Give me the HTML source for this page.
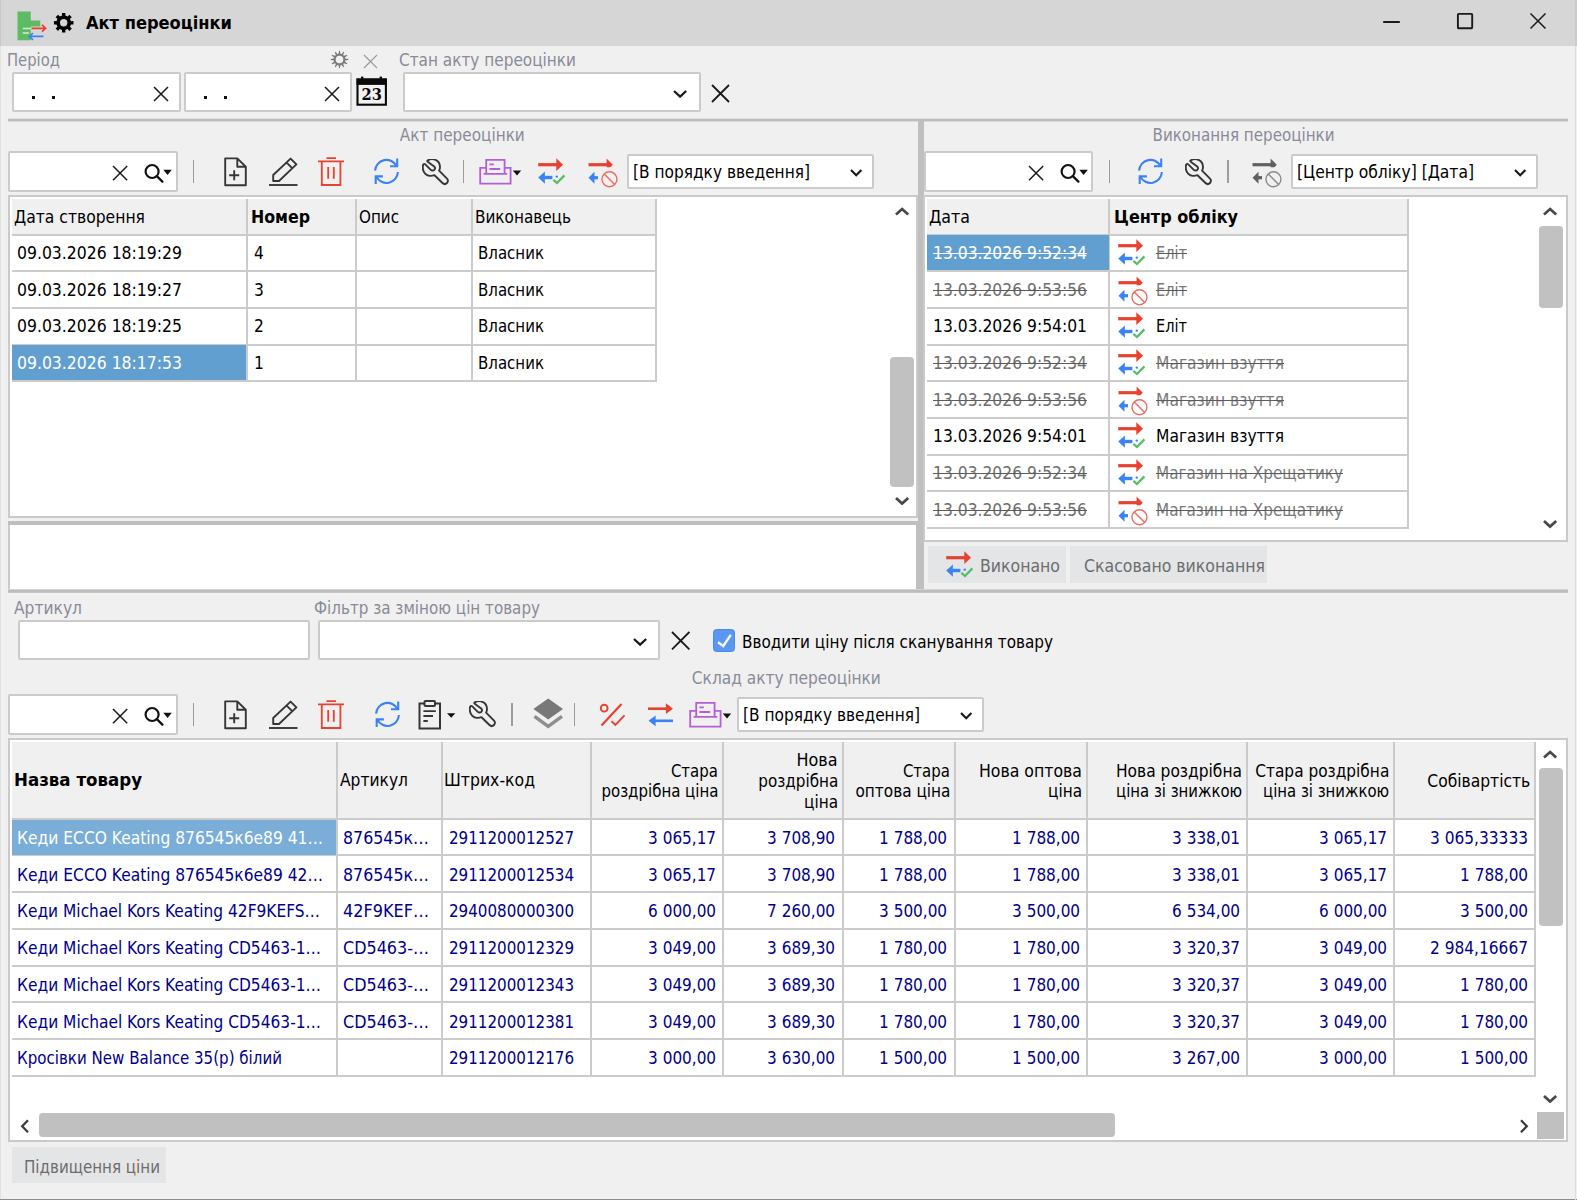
<!DOCTYPE html>
<html lang="uk"><head><meta charset="utf-8"><title>Акт переоцінки</title>
<style>
html,body{margin:0;padding:0;background:#f0f0f0;}
#w{position:relative;width:1577px;height:1200px;overflow:hidden;background:#f0f0f0;font-family:"DejaVu Sans Condensed","Liberation Sans",sans-serif;font-size:18px;}
#w div,#w span,#w svg{position:absolute;box-sizing:border-box;}
#w span{white-space:pre;}
</style></head>
<body><div id="w">
<div style="left:0px;top:0px;width:1577px;height:46px;background:#d6d6d6;"></div>
<div style="left:0px;top:46px;width:1px;height:1154px;background:#e1e1e1;"></div>
<div style="left:0px;top:0px;width:1px;height:46px;background:#c9c9c9;"></div>
<svg style="left:17px;top:11px" width="31" height="30" viewBox="0 0 31 30" fill="none">
<path d="M0.5 0.4 H13.8 V9.4 H23.3 V15.6 H13.8 V29.3 H0.5 Z" fill="#5dbb63"/>
<path d="M5.8 17.5 H14 M5.8 22.1 H12" stroke="#d3edd5" stroke-width="1.5"/>
<path d="M14.5 17.3 H28.3 M25 13.9 L28.6 17.3 L25 20.7" stroke="#e8412f" stroke-width="1.7" stroke-linejoin="miter"/>
<path d="M12.6 25.4 H26.5 M16 22 L12.4 25.4 L16 28.8" stroke="#3b82f6" stroke-width="1.7" stroke-linejoin="miter"/>
</svg>
<svg style="left:53px;top:12px" width="22" height="22" viewBox="0 0 22 22" fill="none"><path d="M9.09 3.58 L8.97 1.05 L12.43 1.05 L12.31 3.58 L14.67 4.55 L16.37 2.68 L18.82 5.13 L16.95 6.83 L17.92 9.19 L20.45 9.07 L20.45 12.53 L17.92 12.41 L16.95 14.77 L18.82 16.47 L16.37 18.92 L14.67 17.05 L12.31 18.02 L12.43 20.55 L8.97 20.55 L9.09 18.02 L6.73 17.05 L5.03 18.92 L2.58 16.47 L4.45 14.77 L3.48 12.41 L0.95 12.53 L0.95 9.07 L3.48 9.19 L4.45 6.83 L2.58 5.13 L5.03 2.68 L6.73 4.55 Z M14.40 10.80 A3.7 3.7 0 1 0 7.00 10.80 A3.7 3.7 0 1 0 14.40 10.80 Z" fill="#000" fill-rule="evenodd"/></svg>
<span style="top:11.50px;font-size:17.5px;line-height:22px;color:#000;font-weight:700;left:86px;transform-origin:0 50%;transform:scaleX(1.0319);">Акт переоцінки</span>
<svg style="left:1380px;top:10.6px" width="22" height="22" viewBox="0 0 22 22" fill="none"><path d="M3.2 11 H19.8" stroke="#1a1a1a" stroke-width="2"/></svg>
<svg style="left:1454px;top:10.3px" width="22" height="22" viewBox="0 0 22 22" fill="none"><rect x="3.9" y="3.9" width="14.3" height="14.3" rx="0.8" stroke="#1a1a1a" stroke-width="1.9"/></svg>
<svg style="left:1527px;top:10.3px" width="22" height="22" viewBox="0 0 22 22" fill="none"><path d="M3.5 3.5 L18.5 18.5 M18.5 3.5 L3.5 18.5" stroke="#1a1a1a" stroke-width="1.5"/></svg>
<span style="top:48.50px;font-size:18px;line-height:22px;color:#8a8a98;left:7px;transform-origin:0 50%;transform:scaleX(0.9131);">Період</span>
<svg style="left:330.3px;top:50.4px" width="19" height="19" viewBox="0 0 19 19" fill="none"><path d="M8.56 3.78 L9.07 0.71 L9.93 0.71 L10.44 3.78 L11.55 4.07 L13.52 1.67 L14.27 2.10 L13.17 5.01 L13.99 5.83 L16.90 4.73 L17.33 5.48 L14.93 7.45 L15.22 8.56 L18.29 9.07 L18.29 9.93 L15.22 10.44 L14.93 11.55 L17.33 13.52 L16.90 14.27 L13.99 13.17 L13.17 13.99 L14.27 16.90 L13.52 17.33 L11.55 14.93 L10.44 15.22 L9.93 18.29 L9.07 18.29 L8.56 15.22 L7.45 14.93 L5.48 17.33 L4.73 16.90 L5.83 13.99 L5.01 13.17 L2.10 14.27 L1.67 13.52 L4.07 11.55 L3.78 10.44 L0.71 9.93 L0.71 9.07 L3.78 8.56 L4.07 7.45 L1.67 5.48 L2.10 4.73 L5.01 5.83 L5.83 5.01 L4.73 2.10 L5.48 1.67 L7.45 4.07 Z M13.30 9.50 A3.8 3.8 0 1 0 5.70 9.50 A3.8 3.8 0 1 0 13.30 9.50 Z" fill="#7b7b7b" fill-rule="evenodd"/></svg>
<svg style="left:363.3px;top:53.6px" width="15" height="15" viewBox="0 0 15 15" fill="none"><path d="M1 1 L14 14 M14 1 L1 14" stroke="#9a9a9a" stroke-width="1.2"/></svg>
<span style="top:48.50px;font-size:18px;line-height:22px;color:#8a8a98;left:399px;transform-origin:0 50%;transform:scaleX(0.9446);">Стан акту переоцінки</span>
<div style="left:12px;top:72px;width:169px;height:40px;background:#fff;border:2px solid #cbcbcb;border-radius:2px;"></div>
<div style="left:32px;top:96px;width:3px;height:3px;background:#111;"></div>
<div style="left:51.5px;top:96px;width:3px;height:3px;background:#111;"></div>
<svg style="left:153px;top:85.5px" width="16" height="16" viewBox="0 0 16 16" fill="none"><path d="M1 1 L15 15 M15 1 L1 15" stroke="#1a1a1a" stroke-width="1.5"/></svg>
<div style="left:184px;top:72px;width:168px;height:40px;background:#fff;border:2px solid #cbcbcb;border-radius:2px;"></div>
<div style="left:204px;top:96px;width:3px;height:3px;background:#111;"></div>
<div style="left:223.5px;top:96px;width:3px;height:3px;background:#111;"></div>
<svg style="left:324px;top:85.5px" width="16" height="16" viewBox="0 0 16 16" fill="none"><path d="M1 1 L15 15 M15 1 L1 15" stroke="#1a1a1a" stroke-width="1.5"/></svg>
<svg style="left:356px;top:76px" width="32" height="31" viewBox="0 0 32 31" fill="none">
<rect x="1.5" y="3.5" width="28.4" height="25.2" fill="#f2f2f2" stroke="#0a0a0a" stroke-width="2.1"/>
<rect x="0.5" y="2.5" width="30.4" height="6.4" fill="#0a0a0a"/>
<rect x="5" y="0.6" width="2.4" height="3" fill="#0a0a0a"/><rect x="23.6" y="0.6" width="2.4" height="3" fill="#0a0a0a"/>
<text x="5.6" y="24.2" textLength="20.4" lengthAdjust="spacingAndGlyphs" font-family="DejaVu Serif,Liberation Serif,serif" font-weight="700" font-size="16.4" fill="#0a0a0a">23</text>
</svg>
<div style="left:403px;top:72px;width:298px;height:40px;background:#fff;border:2px solid #cbcbcb;border-radius:2px;"></div>
<svg style="left:671.9px;top:88.9px" width="16.2" height="9.6" viewBox="0 0 16.2 9.6" fill="none"><path d="M2 2 L8.1 7.6 L14.2 2" stroke="#1a1a1a" stroke-width="2.3" stroke-linejoin="miter"/></svg>
<svg style="left:710.5px;top:84.0px" width="19.0" height="19.0" viewBox="0 0 19.0 19.0" fill="none"><path d="M1 1 L18.0 18.0 M18.0 1 L1 18.0" stroke="#1a1a1a" stroke-width="1.8"/></svg>
<div style="left:8px;top:118px;width:1560px;height:4px;background:linear-gradient(to bottom,#e0e0e0 0 25%,#bdbdbd 25% 75%,#d8d8d8 75% 100%);"></div>
<div style="left:918px;top:121px;width:6px;height:401px;background:#bfbfbf;"></div>
<div style="left:916px;top:521px;width:8px;height:70px;background:#bfbfbf;"></div>
<div style="left:8px;top:521px;width:910px;height:4px;background:#bfbfbf;"></div>
<div style="left:8px;top:589px;width:1560px;height:4px;background:linear-gradient(to bottom,#d4d4d4 0 25%,#bdbdbd 25% 75%,#c4c4c4 75% 100%);"></div>
<span style="top:123.50px;font-size:18px;line-height:22px;color:#8a8a98;left:396.22px;transform-origin:50% 50%;transform:scaleX(0.9430);">Акт переоцінки</span>
<span style="top:123.50px;font-size:18px;line-height:22px;color:#8a8a98;left:1146.48px;transform-origin:50% 50%;transform:scaleX(0.9332);">Виконання переоцінки</span>
<div style="left:8px;top:151px;width:170px;height:41px;background:#fff;border:2px solid #cbcbcb;border-radius:2px;"></div>
<svg style="left:111.7px;top:165.1px" width="16.2" height="16.2" viewBox="0 0 16.2 16.2" fill="none"><path d="M1 1 L15.2 15.2 M15.2 1 L1 15.2" stroke="#1a1a1a" stroke-width="1.5"/></svg>
<svg style="left:141.5px;top:162.5px" width="34" height="24" viewBox="0 0 34 24" fill="none"><circle cx="10.1" cy="8.5" r="6.5" stroke="#111" stroke-width="2.2"/><path d="M14.8 13.2 L20.4 18.6" stroke="#111" stroke-width="2.3" stroke-linecap="round"/><path d="M21.3 6.7 H29.8 L25.55 12 Z" fill="#111"/></svg>
<div style="left:192.8px;top:160px;width:1.6px;height:23px;background:#9c9c9c;"></div>
<svg style="left:223.5px;top:156.5px" width="24" height="30" viewBox="0 0 24 30" fill="none"><path d="M1.2 1.4 H13.3 L21.8 9.8 V28.2 H1.2 Z M13.3 1.4 V9.8 H21.8" stroke="#363636" stroke-width="1.9" stroke-linejoin="round"/><path d="M10.2 13.2 V23.2 M5.2 18.2 H15.2" stroke="#363636" stroke-width="1.9"/></svg>
<svg style="left:269px;top:156.5px" width="30" height="30" viewBox="0 0 30 30" fill="none"><path d="M0 28 H28.5" stroke="#363636" stroke-width="1.9"/><path d="M21.6 1.6 L27.4 7.4 L10 24 H4.2 V18 Z M17.4 5.4 L23.4 11.4" stroke="#363636" stroke-width="1.9" stroke-linejoin="round"/></svg>
<svg style="left:318px;top:156.5px" width="27" height="30" viewBox="0 0 27 30" fill="none"><path d="M8.5 1.2 H18 M0 4.4 H26 M3.8 4.4 V28 H22.4 V4.4 M10.2 10 V21.8 M15.8 10 V21.8" stroke="#e8412f" stroke-width="1.8"/></svg>
<svg style="left:372.8px;top:157px" width="28" height="28" viewBox="0 0 28 28" fill="none"><path d="M2.1 13.6 A11.4 11.4 0 0 1 23.6 9 M24.2 1.6 V9.2 H17 M24.9 15 A11.4 11.4 0 0 1 3.3 19.6 M2.7 27 V19.4 H9.9" stroke="#3b82f6" stroke-width="2.1" stroke-linejoin="miter"/></svg>
<svg style="left:421.5px;top:158.5px" width="28" height="27" viewBox="0 0 28 27" fill="none"><path d="M5.6 1.6 C7.5 0.3 11 -0.2 13.5 0.9 C16.2 2.1 18 5 18 8 C18 9.5 17.6 10.7 17.1 11.6 L25 19.6 C26.3 20.9 26.2 22.8 25 24 C23.8 25.2 21.8 25.3 20.5 24 L12.5 16.2 C11 16.8 9.5 17 7.8 16.9 C4.5 16.6 1.5 13.8 0.9 10 C0.6 8.3 0.8 6.8 1.2 5.6 C1.5 4.7 2.6 4.6 3.3 5.3 L8.8 10.8 C9.8 11.8 11.4 11.8 12.3 10.8 C13.2 9.8 13.1 8.4 12.2 7.5 L6 2.9 C5.2 2.4 5 2 5.6 1.6 Z" stroke="#363636" stroke-width="1.9" stroke-linejoin="round"/></svg>
<div style="left:462.90000000000003px;top:160px;width:1.6px;height:23px;background:#9c9c9c;"></div>
<svg style="left:479px;top:158.5px" width="44" height="27" viewBox="0 0 44 27" fill="none"><path d="M7 8.8 H1.2 V24.6 H31.6 V8.8 H25.8 M7.2 14.8 V0.9 H25.6 V14.8 M4.6 14.8 H28.2 M10.4 5.3 H14.8 M10.4 10 H21.2" stroke="#b35fd8" stroke-width="1.8"/><path d="M33.8 11.6 H42.2 L38 16.4 Z" fill="#111"/></svg>
<svg style="left:538px;top:158px" width="29" height="28" viewBox="0 0 29 28" fill="none"><path d="M0.2 6.7 H19" stroke="#e8412f" stroke-width="3.2"/><path d="M18.3 0.3 L25 6.7 L18.3 13.1 Z" fill="#e8412f"/><path d="M6.5 19.5 H14.4" stroke="#3b82f6" stroke-width="3.4"/><path d="M6.9 13.6 L0.2 19.6 L6.9 25.8 Z" fill="#3b82f6"/><circle cx="18.8" cy="18.6" r="1.2" fill="#3b82f6"/><path d="M15.4 21.8 L19 25 L26.4 17.4" stroke="#58bd66" stroke-width="2.3"/></svg>
<svg style="left:587.5px;top:158px" width="32" height="32" viewBox="0 0 32 32" fill="none"><path d="M0.5 6.7 H19" stroke="#e8412f" stroke-width="3.2"/><path d="M18.6 0.5 L24.8 6.7 L22.3 9.2 H18.6 Z" fill="#e8412f"/><path d="M6 19.7 H10" stroke="#3b82f6" stroke-width="3.2"/><path d="M6.5 13.7 L0.5 19.7 L6.5 25.7 Z" fill="#3b82f6"/><circle cx="21.45" cy="21.3" r="7.5" stroke="#ee6a5f" stroke-width="1.4"/><path d="M16.2 16 L26.7 26.6" stroke="#ee6a5f" stroke-width="1.4"/></svg>
<div style="left:627px;top:154px;width:247px;height:35px;background:#fff;border:2px solid #cbcbcb;border-radius:2px;"></div>
<span style="top:160.80px;font-size:18px;line-height:22px;color:#000;left:633px;transform-origin:0 50%;transform:scaleX(0.9503);">[В порядку введення]</span>
<svg style="left:849.3px;top:167.5px" width="14.4" height="9.2" viewBox="0 0 14.4 9.2" fill="none"><path d="M2 2 L7.2 7.2 L12.4 2" stroke="#1a1a1a" stroke-width="2.2" stroke-linejoin="miter"/></svg>
<div style="left:924px;top:151px;width:169px;height:41px;background:#fff;border:2px solid #cbcbcb;border-radius:2px;"></div>
<svg style="left:1027.7px;top:165.1px" width="16.2" height="16.2" viewBox="0 0 16.2 16.2" fill="none"><path d="M1 1 L15.2 15.2 M15.2 1 L1 15.2" stroke="#1a1a1a" stroke-width="1.5"/></svg>
<svg style="left:1057.5px;top:162.5px" width="34" height="24" viewBox="0 0 34 24" fill="none"><circle cx="10.1" cy="8.5" r="6.5" stroke="#111" stroke-width="2.2"/><path d="M14.8 13.2 L20.4 18.6" stroke="#111" stroke-width="2.3" stroke-linecap="round"/><path d="M21.3 6.7 H29.8 L25.55 12 Z" fill="#111"/></svg>
<div style="left:1108.8px;top:160px;width:1.6px;height:23px;background:#9c9c9c;"></div>
<svg style="left:1136.5px;top:157px" width="28" height="28" viewBox="0 0 28 28" fill="none"><path d="M2.1 13.6 A11.4 11.4 0 0 1 23.6 9 M24.2 1.6 V9.2 H17 M24.9 15 A11.4 11.4 0 0 1 3.3 19.6 M2.7 27 V19.4 H9.9" stroke="#3b82f6" stroke-width="2.1" stroke-linejoin="miter"/></svg>
<svg style="left:1184.5px;top:158.5px" width="28" height="27" viewBox="0 0 28 27" fill="none"><path d="M5.6 1.6 C7.5 0.3 11 -0.2 13.5 0.9 C16.2 2.1 18 5 18 8 C18 9.5 17.6 10.7 17.1 11.6 L25 19.6 C26.3 20.9 26.2 22.8 25 24 C23.8 25.2 21.8 25.3 20.5 24 L12.5 16.2 C11 16.8 9.5 17 7.8 16.9 C4.5 16.6 1.5 13.8 0.9 10 C0.6 8.3 0.8 6.8 1.2 5.6 C1.5 4.7 2.6 4.6 3.3 5.3 L8.8 10.8 C9.8 11.8 11.4 11.8 12.3 10.8 C13.2 9.8 13.1 8.4 12.2 7.5 L6 2.9 C5.2 2.4 5 2 5.6 1.6 Z" stroke="#363636" stroke-width="1.9" stroke-linejoin="round"/></svg>
<div style="left:1227.3px;top:160px;width:1.6px;height:23px;background:#9c9c9c;"></div>
<svg style="left:1252px;top:158px" width="32" height="32" viewBox="0 0 32 32" fill="none"><path d="M0.5 6.7 H19" stroke="#606060" stroke-width="3.2"/><path d="M18.6 0.5 L24.8 6.7 L22.3 9.2 H18.6 Z" fill="#606060"/><path d="M6 19.7 H10" stroke="#606060" stroke-width="3.2"/><path d="M6.5 13.7 L0.5 19.7 L6.5 25.7 Z" fill="#606060"/><circle cx="21.45" cy="21.3" r="7.5" stroke="#8a8a8a" stroke-width="1.4"/><path d="M16.2 16 L26.7 26.6" stroke="#8a8a8a" stroke-width="1.4"/></svg>
<div style="left:1291px;top:154px;width:247px;height:35px;background:#fff;border:2px solid #cbcbcb;border-radius:2px;"></div>
<span style="top:160.80px;font-size:18px;line-height:22px;color:#000;left:1297px;transform-origin:0 50%;transform:scaleX(0.9596);">[Центр обліку] [Дата]</span>
<svg style="left:1513.3px;top:167.5px" width="14.4" height="9.2" viewBox="0 0 14.4 9.2" fill="none"><path d="M2 2 L7.2 7.2 L12.4 2" stroke="#1a1a1a" stroke-width="2.2" stroke-linejoin="miter"/></svg>
<div style="left:8px;top:195px;width:910px;height:323px;background:#fff;border:2px solid #cacaca;"></div>
<div style="left:8px;top:525px;width:908px;height:64px;background:#fff;border-left:2px solid #cacaca;"></div>
<div style="left:12px;top:199px;width:643px;height:36px;background:#f0f0f0;"></div>
<div style="left:12px;top:234px;width:645px;height:2px;background:#cbcbcb;"></div>
<div style="left:12px;top:270px;width:645px;height:2px;background:#cbcbcb;"></div>
<div style="left:12px;top:307px;width:645px;height:2px;background:#cbcbcb;"></div>
<div style="left:12px;top:344px;width:645px;height:2px;background:#cbcbcb;"></div>
<div style="left:12px;top:380px;width:645px;height:2px;background:#cbcbcb;"></div>
<div style="left:246px;top:199px;width:2px;height:183px;background:#cbcbcb;"></div>
<div style="left:355px;top:199px;width:2px;height:183px;background:#cbcbcb;"></div>
<div style="left:471px;top:199px;width:2px;height:183px;background:#cbcbcb;"></div>
<div style="left:655px;top:199px;width:2px;height:183px;background:#cbcbcb;"></div>
<span style="top:205.50px;font-size:18px;line-height:22px;color:#000;left:14px;transform-origin:0 50%;transform:scaleX(0.9630);">Дата створення</span>
<span style="top:205.50px;font-size:18px;line-height:22px;color:#000;font-weight:700;left:251px;transform-origin:0 50%;transform:scaleX(0.9752);">Номер</span>
<span style="top:205.50px;font-size:18px;line-height:22px;color:#000;left:359px;transform-origin:0 50%;transform:scaleX(0.9353);">Опис</span>
<span style="top:205.50px;font-size:18px;line-height:22px;color:#000;left:475px;transform-origin:0 50%;transform:scaleX(0.9419);">Виконавець</span>
<span style="top:242.00px;font-size:18px;line-height:22px;color:#000;left:17px;transform-origin:0 50%;transform:scaleX(0.9674);">09.03.2026 18:19:29</span>
<span style="top:242.00px;font-size:18px;line-height:22px;color:#000;left:254px;transform-origin:0 50%;transform:scaleX(0.9550);">4</span>
<span style="top:242.00px;font-size:18px;line-height:22px;color:#000;left:478px;transform-origin:0 50%;transform:scaleX(0.9271);">Власник</span>
<span style="top:278.67px;font-size:18px;line-height:22px;color:#000;left:17px;transform-origin:0 50%;transform:scaleX(0.9674);">09.03.2026 18:19:27</span>
<span style="top:278.67px;font-size:18px;line-height:22px;color:#000;left:254px;transform-origin:0 50%;transform:scaleX(0.9550);">3</span>
<span style="top:278.67px;font-size:18px;line-height:22px;color:#000;left:478px;transform-origin:0 50%;transform:scaleX(0.9271);">Власник</span>
<span style="top:315.34px;font-size:18px;line-height:22px;color:#000;left:17px;transform-origin:0 50%;transform:scaleX(0.9674);">09.03.2026 18:19:25</span>
<span style="top:315.34px;font-size:18px;line-height:22px;color:#000;left:254px;transform-origin:0 50%;transform:scaleX(0.9550);">2</span>
<span style="top:315.34px;font-size:18px;line-height:22px;color:#000;left:478px;transform-origin:0 50%;transform:scaleX(0.9271);">Власник</span>
<div style="left:12px;top:345px;width:234px;height:35px;background:#629fd1;"></div>
<span style="top:352.01px;font-size:18px;line-height:22px;color:#fff;left:17px;transform-origin:0 50%;transform:scaleX(0.9674);">09.03.2026 18:17:53</span>
<span style="top:352.01px;font-size:18px;line-height:22px;color:#000;left:254px;transform-origin:0 50%;transform:scaleX(0.9550);">1</span>
<span style="top:352.01px;font-size:18px;line-height:22px;color:#000;left:478px;transform-origin:0 50%;transform:scaleX(0.9271);">Власник</span>
<svg style="left:893.6px;top:206.7px" width="16.2" height="9.6" viewBox="0 0 16.2 9.6" fill="none"><path d="M2 7.6 L8.1 2 L14.2 7.6" stroke="#484848" stroke-width="2.7" stroke-linejoin="miter"/></svg>
<div style="left:890px;top:357px;width:24px;height:130px;background:#c1c1c1;border-radius:4px;"></div>
<svg style="left:893.6px;top:495.7px" width="16.2" height="9.6" viewBox="0 0 16.2 9.6" fill="none"><path d="M2 2 L8.1 7.6 L14.2 2" stroke="#484848" stroke-width="2.7" stroke-linejoin="miter"/></svg>
<div style="left:923px;top:195px;width:645px;height:347px;background:#fff;border:2px solid #cacaca;"></div>
<div style="left:927px;top:199px;width:480px;height:36px;background:#f0f0f0;"></div>
<div style="left:927px;top:234px;width:482px;height:2px;background:#cbcbcb;"></div>
<div style="left:927px;top:270px;width:482px;height:2px;background:#cbcbcb;"></div>
<div style="left:927px;top:307px;width:482px;height:2px;background:#cbcbcb;"></div>
<div style="left:927px;top:344px;width:482px;height:2px;background:#cbcbcb;"></div>
<div style="left:927px;top:380px;width:482px;height:2px;background:#cbcbcb;"></div>
<div style="left:927px;top:417px;width:482px;height:2px;background:#cbcbcb;"></div>
<div style="left:927px;top:454px;width:482px;height:2px;background:#cbcbcb;"></div>
<div style="left:927px;top:490px;width:482px;height:2px;background:#cbcbcb;"></div>
<div style="left:927px;top:527px;width:482px;height:2px;background:#cbcbcb;"></div>
<div style="left:1108px;top:199px;width:2px;height:330px;background:#cbcbcb;"></div>
<div style="left:1407px;top:199px;width:2px;height:330px;background:#cbcbcb;"></div>
<span style="top:205.50px;font-size:18px;line-height:22px;color:#000;left:929px;transform-origin:0 50%;transform:scaleX(0.9776);">Дата</span>
<span style="top:205.50px;font-size:18px;line-height:22px;color:#000;font-weight:700;left:1114px;transform-origin:0 50%;transform:scaleX(0.9903);">Центр обліку</span>
<div style="left:927px;top:235px;width:182px;height:35px;background:#629fd1;"></div>
<span style="top:242.00px;font-size:18px;line-height:22px;color:#fff;text-decoration:line-through;text-decoration-color:#fff;text-decoration-thickness:1.2px;left:933px;transform-origin:0 50%;transform:scaleX(0.9609);">13.03.2026 9:52:34</span>
<svg style="left:1117.8px;top:239.1px" width="29" height="28" viewBox="0 0 29 28" fill="none"><path d="M0.2 6.7 H19" stroke="#e8412f" stroke-width="3.2"/><path d="M18.3 0.3 L25 6.7 L18.3 13.1 Z" fill="#e8412f"/><path d="M6.5 19.5 H14.4" stroke="#3b82f6" stroke-width="3.4"/><path d="M6.9 13.6 L0.2 19.6 L6.9 25.8 Z" fill="#3b82f6"/><circle cx="18.8" cy="18.6" r="1.2" fill="#3b82f6"/><path d="M15.4 21.8 L19 25 L26.4 17.4" stroke="#58bd66" stroke-width="2.3"/></svg>
<span style="top:242.00px;font-size:18px;line-height:22px;color:#7a7a7a;text-decoration:line-through;text-decoration-color:#5c5c5c;text-decoration-thickness:1.2px;left:1156px;transform-origin:0 50%;transform:scaleX(0.8981);">Еліт</span>
<span style="top:278.67px;font-size:18px;line-height:22px;color:#6e6e6e;text-decoration:line-through;text-decoration-color:#5c5c5c;text-decoration-thickness:1.2px;left:933px;transform-origin:0 50%;transform:scaleX(0.9609);">13.03.2026 9:53:56</span>
<svg style="left:1117.5px;top:275.77000000000004px" width="32" height="32" viewBox="0 0 32 32" fill="none"><path d="M0.5 6.7 H19" stroke="#e8412f" stroke-width="3.2"/><path d="M18.6 0.5 L24.8 6.7 L22.3 9.2 H18.6 Z" fill="#e8412f"/><path d="M6 19.7 H10" stroke="#3b82f6" stroke-width="3.2"/><path d="M6.5 13.7 L0.5 19.7 L6.5 25.7 Z" fill="#3b82f6"/><circle cx="21.45" cy="21.3" r="7.5" stroke="#ee6a5f" stroke-width="1.4"/><path d="M16.2 16 L26.7 26.6" stroke="#ee6a5f" stroke-width="1.4"/></svg>
<span style="top:278.67px;font-size:18px;line-height:22px;color:#7a7a7a;text-decoration:line-through;text-decoration-color:#5c5c5c;text-decoration-thickness:1.2px;left:1156px;transform-origin:0 50%;transform:scaleX(0.8981);">Еліт</span>
<span style="top:315.34px;font-size:18px;line-height:22px;color:#000;left:933px;transform-origin:0 50%;transform:scaleX(0.9609);">13.03.2026 9:54:01</span>
<svg style="left:1117.8px;top:312.44000000000005px" width="29" height="28" viewBox="0 0 29 28" fill="none"><path d="M0.2 6.7 H19" stroke="#e8412f" stroke-width="3.2"/><path d="M18.3 0.3 L25 6.7 L18.3 13.1 Z" fill="#e8412f"/><path d="M6.5 19.5 H14.4" stroke="#3b82f6" stroke-width="3.4"/><path d="M6.9 13.6 L0.2 19.6 L6.9 25.8 Z" fill="#3b82f6"/><circle cx="18.8" cy="18.6" r="1.2" fill="#3b82f6"/><path d="M15.4 21.8 L19 25 L26.4 17.4" stroke="#58bd66" stroke-width="2.3"/></svg>
<span style="top:315.34px;font-size:18px;line-height:22px;color:#000;left:1156px;transform-origin:0 50%;transform:scaleX(0.8981);">Еліт</span>
<span style="top:352.01px;font-size:18px;line-height:22px;color:#6e6e6e;text-decoration:line-through;text-decoration-color:#5c5c5c;text-decoration-thickness:1.2px;left:933px;transform-origin:0 50%;transform:scaleX(0.9609);">13.03.2026 9:52:34</span>
<svg style="left:1117.8px;top:349.11px" width="29" height="28" viewBox="0 0 29 28" fill="none"><path d="M0.2 6.7 H19" stroke="#e8412f" stroke-width="3.2"/><path d="M18.3 0.3 L25 6.7 L18.3 13.1 Z" fill="#e8412f"/><path d="M6.5 19.5 H14.4" stroke="#3b82f6" stroke-width="3.4"/><path d="M6.9 13.6 L0.2 19.6 L6.9 25.8 Z" fill="#3b82f6"/><circle cx="18.8" cy="18.6" r="1.2" fill="#3b82f6"/><path d="M15.4 21.8 L19 25 L26.4 17.4" stroke="#58bd66" stroke-width="2.3"/></svg>
<span style="top:352.01px;font-size:18px;line-height:22px;color:#7a7a7a;text-decoration:line-through;text-decoration-color:#5c5c5c;text-decoration-thickness:1.2px;left:1156px;transform-origin:0 50%;transform:scaleX(0.9585);">Магазин взуття</span>
<span style="top:388.68px;font-size:18px;line-height:22px;color:#6e6e6e;text-decoration:line-through;text-decoration-color:#5c5c5c;text-decoration-thickness:1.2px;left:933px;transform-origin:0 50%;transform:scaleX(0.9609);">13.03.2026 9:53:56</span>
<svg style="left:1117.5px;top:385.78000000000003px" width="32" height="32" viewBox="0 0 32 32" fill="none"><path d="M0.5 6.7 H19" stroke="#e8412f" stroke-width="3.2"/><path d="M18.6 0.5 L24.8 6.7 L22.3 9.2 H18.6 Z" fill="#e8412f"/><path d="M6 19.7 H10" stroke="#3b82f6" stroke-width="3.2"/><path d="M6.5 13.7 L0.5 19.7 L6.5 25.7 Z" fill="#3b82f6"/><circle cx="21.45" cy="21.3" r="7.5" stroke="#ee6a5f" stroke-width="1.4"/><path d="M16.2 16 L26.7 26.6" stroke="#ee6a5f" stroke-width="1.4"/></svg>
<span style="top:388.68px;font-size:18px;line-height:22px;color:#7a7a7a;text-decoration:line-through;text-decoration-color:#5c5c5c;text-decoration-thickness:1.2px;left:1156px;transform-origin:0 50%;transform:scaleX(0.9585);">Магазин взуття</span>
<span style="top:425.35px;font-size:18px;line-height:22px;color:#000;left:933px;transform-origin:0 50%;transform:scaleX(0.9609);">13.03.2026 9:54:01</span>
<svg style="left:1117.8px;top:422.45000000000005px" width="29" height="28" viewBox="0 0 29 28" fill="none"><path d="M0.2 6.7 H19" stroke="#e8412f" stroke-width="3.2"/><path d="M18.3 0.3 L25 6.7 L18.3 13.1 Z" fill="#e8412f"/><path d="M6.5 19.5 H14.4" stroke="#3b82f6" stroke-width="3.4"/><path d="M6.9 13.6 L0.2 19.6 L6.9 25.8 Z" fill="#3b82f6"/><circle cx="18.8" cy="18.6" r="1.2" fill="#3b82f6"/><path d="M15.4 21.8 L19 25 L26.4 17.4" stroke="#58bd66" stroke-width="2.3"/></svg>
<span style="top:425.35px;font-size:18px;line-height:22px;color:#000;left:1156px;transform-origin:0 50%;transform:scaleX(0.9585);">Магазин взуття</span>
<span style="top:462.02px;font-size:18px;line-height:22px;color:#6e6e6e;text-decoration:line-through;text-decoration-color:#5c5c5c;text-decoration-thickness:1.2px;left:933px;transform-origin:0 50%;transform:scaleX(0.9609);">13.03.2026 9:52:34</span>
<svg style="left:1117.8px;top:459.12px" width="29" height="28" viewBox="0 0 29 28" fill="none"><path d="M0.2 6.7 H19" stroke="#e8412f" stroke-width="3.2"/><path d="M18.3 0.3 L25 6.7 L18.3 13.1 Z" fill="#e8412f"/><path d="M6.5 19.5 H14.4" stroke="#3b82f6" stroke-width="3.4"/><path d="M6.9 13.6 L0.2 19.6 L6.9 25.8 Z" fill="#3b82f6"/><circle cx="18.8" cy="18.6" r="1.2" fill="#3b82f6"/><path d="M15.4 21.8 L19 25 L26.4 17.4" stroke="#58bd66" stroke-width="2.3"/></svg>
<span style="top:462.02px;font-size:18px;line-height:22px;color:#7a7a7a;text-decoration:line-through;text-decoration-color:#5c5c5c;text-decoration-thickness:1.2px;left:1156px;transform-origin:0 50%;transform:scaleX(0.9412);">Магазин на Хрещатику</span>
<span style="top:498.69px;font-size:18px;line-height:22px;color:#6e6e6e;text-decoration:line-through;text-decoration-color:#5c5c5c;text-decoration-thickness:1.2px;left:933px;transform-origin:0 50%;transform:scaleX(0.9609);">13.03.2026 9:53:56</span>
<svg style="left:1117.5px;top:495.79px" width="32" height="32" viewBox="0 0 32 32" fill="none"><path d="M0.5 6.7 H19" stroke="#e8412f" stroke-width="3.2"/><path d="M18.6 0.5 L24.8 6.7 L22.3 9.2 H18.6 Z" fill="#e8412f"/><path d="M6 19.7 H10" stroke="#3b82f6" stroke-width="3.2"/><path d="M6.5 13.7 L0.5 19.7 L6.5 25.7 Z" fill="#3b82f6"/><circle cx="21.45" cy="21.3" r="7.5" stroke="#ee6a5f" stroke-width="1.4"/><path d="M16.2 16 L26.7 26.6" stroke="#ee6a5f" stroke-width="1.4"/></svg>
<span style="top:498.69px;font-size:18px;line-height:22px;color:#7a7a7a;text-decoration:line-through;text-decoration-color:#5c5c5c;text-decoration-thickness:1.2px;left:1156px;transform-origin:0 50%;transform:scaleX(0.9412);">Магазин на Хрещатику</span>
<svg style="left:1542.4px;top:206.7px" width="16.2" height="9.6" viewBox="0 0 16.2 9.6" fill="none"><path d="M2 7.6 L8.1 2 L14.2 7.6" stroke="#484848" stroke-width="2.7" stroke-linejoin="miter"/></svg>
<div style="left:1539px;top:226px;width:24px;height:82px;background:#c1c1c1;border-radius:4px;"></div>
<svg style="left:1542.4px;top:519.2px" width="16.2" height="9.6" viewBox="0 0 16.2 9.6" fill="none"><path d="M2 2 L8.1 7.6 L14.2 2" stroke="#484848" stroke-width="2.7" stroke-linejoin="miter"/></svg>
<div style="left:927.5px;top:546px;width:138.5px;height:36.6px;background:#e3e5e7;"></div>
<svg style="left:945.7px;top:550.8px" width="29" height="28" viewBox="0 0 29 28" fill="none"><path d="M0.2 6.7 H19" stroke="#e8412f" stroke-width="3.2"/><path d="M18.3 0.3 L25 6.7 L18.3 13.1 Z" fill="#e8412f"/><path d="M6.5 19.5 H14.4" stroke="#3b82f6" stroke-width="3.4"/><path d="M6.9 13.6 L0.2 19.6 L6.9 25.8 Z" fill="#3b82f6"/><circle cx="18.8" cy="18.6" r="1.2" fill="#3b82f6"/><path d="M15.4 21.8 L19 25 L26.4 17.4" stroke="#58bd66" stroke-width="2.3"/></svg>
<span style="top:555.00px;font-size:18px;line-height:22px;color:#6d6d6d;left:980px;transform-origin:0 50%;transform:scaleX(0.9717);">Виконано</span>
<div style="left:1070px;top:546px;width:197px;height:36.6px;background:#e3e5e7;"></div>
<span style="top:555.00px;font-size:18px;line-height:22px;color:#6d6d6d;left:1084px;transform-origin:0 50%;transform:scaleX(0.9725);">Скасовано виконання</span>
<span style="top:596.50px;font-size:18px;line-height:22px;color:#8a8a98;left:14px;transform-origin:0 50%;transform:scaleX(0.9573);">Артикул</span>
<span style="top:596.50px;font-size:18px;line-height:22px;color:#8a8a98;left:314px;transform-origin:0 50%;transform:scaleX(0.9362);">Фільтр за зміною цін товару</span>
<div style="left:18px;top:620px;width:292px;height:40px;background:#fff;border:2px solid #cbcbcb;border-radius:2px;"></div>
<div style="left:318px;top:620px;width:342px;height:40px;background:#fff;border:2px solid #cbcbcb;border-radius:2px;"></div>
<svg style="left:631.6999999999999px;top:637.2px" width="16.2" height="9.6" viewBox="0 0 16.2 9.6" fill="none"><path d="M2 2 L8.1 7.6 L14.2 2" stroke="#1a1a1a" stroke-width="2.3" stroke-linejoin="miter"/></svg>
<svg style="left:670.9px;top:631.0999999999999px" width="19.4" height="19.4" viewBox="0 0 19.4 19.4" fill="none"><path d="M1 1 L18.4 18.4 M18.4 1 L1 18.4" stroke="#1a1a1a" stroke-width="1.8"/></svg>
<div style="left:713px;top:629px;width:22px;height:23px;background:#5a97ef;border-radius:3.5px;border:1px solid #4a8cec;"></div>
<svg style="left:713px;top:629px" width="22" height="23" viewBox="0 0 22 23" fill="none"><path d="M5 13.2 L10.2 17 L17.8 5.8" stroke="#fff" stroke-width="2.3"/></svg>
<span style="top:630.50px;font-size:18px;line-height:22px;color:#000;left:742px;transform-origin:0 50%;transform:scaleX(0.9412);">Вводити ціну після сканування товару</span>
<span style="top:667.00px;font-size:18px;line-height:22px;color:#8a8a98;left:687.15px;transform-origin:50% 50%;transform:scaleX(0.9512);">Склад акту переоцінки</span>
<div style="left:8px;top:694px;width:170px;height:41px;background:#fff;border:2px solid #cbcbcb;border-radius:2px;"></div>
<svg style="left:111.7px;top:708.1px" width="16.2" height="16.2" viewBox="0 0 16.2 16.2" fill="none"><path d="M1 1 L15.2 15.2 M15.2 1 L1 15.2" stroke="#1a1a1a" stroke-width="1.5"/></svg>
<svg style="left:141.5px;top:705.5px" width="34" height="24" viewBox="0 0 34 24" fill="none"><circle cx="10.1" cy="8.5" r="6.5" stroke="#111" stroke-width="2.2"/><path d="M14.8 13.2 L20.4 18.6" stroke="#111" stroke-width="2.3" stroke-linecap="round"/><path d="M21.3 6.7 H29.8 L25.55 12 Z" fill="#111"/></svg>
<div style="left:192.8px;top:703px;width:1.6px;height:23px;background:#9c9c9c;"></div>
<svg style="left:223.5px;top:699.5px" width="24" height="30" viewBox="0 0 24 30" fill="none"><path d="M1.2 1.4 H13.3 L21.8 9.8 V28.2 H1.2 Z M13.3 1.4 V9.8 H21.8" stroke="#363636" stroke-width="1.9" stroke-linejoin="round"/><path d="M10.2 13.2 V23.2 M5.2 18.2 H15.2" stroke="#363636" stroke-width="1.9"/></svg>
<svg style="left:269px;top:699.5px" width="30" height="30" viewBox="0 0 30 30" fill="none"><path d="M0 28 H28.5" stroke="#363636" stroke-width="1.9"/><path d="M21.6 1.6 L27.4 7.4 L10 24 H4.2 V18 Z M17.4 5.4 L23.4 11.4" stroke="#363636" stroke-width="1.9" stroke-linejoin="round"/></svg>
<svg style="left:318px;top:699.5px" width="27" height="30" viewBox="0 0 27 30" fill="none"><path d="M8.5 1.2 H18 M0 4.4 H26 M3.8 4.4 V28 H22.4 V4.4 M10.2 10 V21.8 M15.8 10 V21.8" stroke="#e8412f" stroke-width="1.8"/></svg>
<svg style="left:373.5px;top:700px" width="28" height="28" viewBox="0 0 28 28" fill="none"><path d="M2.1 13.6 A11.4 11.4 0 0 1 23.6 9 M24.2 1.6 V9.2 H17 M24.9 15 A11.4 11.4 0 0 1 3.3 19.6 M2.7 27 V19.4 H9.9" stroke="#3b82f6" stroke-width="2.1" stroke-linejoin="miter"/></svg>
<svg style="left:418px;top:699.5px" width="40" height="30" viewBox="0 0 40 30" fill="none"><path d="M6.5 3.5 H1.5 V28.5 H22 V3.5 H17" stroke="#363636" stroke-width="2"/><rect x="6.5" y="1" width="10.5" height="5" rx="1" stroke="#363636" stroke-width="2"/><path d="M5.4 11.2 H17.8 M5.4 16 H15 M5.4 21 H9.8" stroke="#363636" stroke-width="1.8"/><path d="M29 13.2 H37.4 L33.2 17.8 Z" fill="#111"/></svg>
<svg style="left:469px;top:700.8px" width="28" height="27" viewBox="0 0 28 27" fill="none"><path d="M5.6 1.6 C7.5 0.3 11 -0.2 13.5 0.9 C16.2 2.1 18 5 18 8 C18 9.5 17.6 10.7 17.1 11.6 L25 19.6 C26.3 20.9 26.2 22.8 25 24 C23.8 25.2 21.8 25.3 20.5 24 L12.5 16.2 C11 16.8 9.5 17 7.8 16.9 C4.5 16.6 1.5 13.8 0.9 10 C0.6 8.3 0.8 6.8 1.2 5.6 C1.5 4.7 2.6 4.6 3.3 5.3 L8.8 10.8 C9.8 11.8 11.4 11.8 12.3 10.8 C13.2 9.8 13.1 8.4 12.2 7.5 L6 2.9 C5.2 2.4 5 2 5.6 1.6 Z" stroke="#363636" stroke-width="1.9" stroke-linejoin="round"/></svg>
<div style="left:511.3px;top:703px;width:1.6px;height:23px;background:#9c9c9c;"></div>
<svg style="left:533px;top:698px" width="31" height="32" viewBox="0 0 31 32" fill="none"><path d="M15.2 0.5 L30 11 L15.2 21.5 L0.4 11 Z" fill="#787878"/><path d="M1.5 18.4 L15.2 28.4 L29 18.4" stroke="#8e8e8e" stroke-width="3.4"/></svg>
<div style="left:573.9px;top:703px;width:1.6px;height:23px;background:#9c9c9c;"></div>
<svg style="left:598.5px;top:702.5px" width="27" height="25" viewBox="0 0 27 25" fill="none"><circle cx="5.2" cy="5.2" r="3.4" stroke="#e8412f" stroke-width="1.9"/><path d="M22.5 1 L2.5 22.5" stroke="#e8412f" stroke-width="2.2"/><path d="M12.5 18.2 L16.4 21.8 L25.5 12.4" stroke="#e8412f" stroke-width="1.9"/></svg>
<svg style="left:648px;top:702.5px" width="26" height="26" viewBox="0 0 26 26" fill="none"><path d="M0 5.7 H20" stroke="#e8412f" stroke-width="2.6"/><path d="M17.9 0.3 L25 5.7 L17.9 11.1 Z" fill="#e8412f"/><path d="M6 17.8 H25" stroke="#3b82f6" stroke-width="2.6"/><path d="M7.6 12.4 L0.5 17.8 L7.6 23.2 Z" fill="#3b82f6"/></svg>
<svg style="left:688.5px;top:701.5px" width="44" height="27" viewBox="0 0 44 27" fill="none"><path d="M7 8.8 H1.2 V24.6 H31.6 V8.8 H25.8 M7.2 14.8 V0.9 H25.6 V14.8 M4.6 14.8 H28.2 M10.4 5.3 H14.8 M10.4 10 H21.2" stroke="#b35fd8" stroke-width="1.8"/><path d="M33.8 11.6 H42.2 L38 16.4 Z" fill="#111"/></svg>
<div style="left:737px;top:697px;width:247px;height:35px;background:#fff;border:2px solid #cbcbcb;border-radius:2px;"></div>
<span style="top:703.80px;font-size:18px;line-height:22px;color:#000;left:743px;transform-origin:0 50%;transform:scaleX(0.9503);">[В порядку введення]</span>
<svg style="left:959.3px;top:710.5px" width="14.4" height="9.2" viewBox="0 0 14.4 9.2" fill="none"><path d="M2 2 L7.2 7.2 L12.4 2" stroke="#1a1a1a" stroke-width="2.2" stroke-linejoin="miter"/></svg>
<div style="left:8px;top:738px;width:1560px;height:404px;background:#fff;border:2px solid #cacaca;"></div>
<div style="left:12px;top:742px;width:1522px;height:77px;background:#f0f0f0;"></div>
<div style="left:12px;top:818px;width:1524px;height:2px;background:#cbcbcb;"></div>
<div style="left:12px;top:854px;width:1524px;height:2px;background:#cbcbcb;"></div>
<div style="left:12px;top:891px;width:1524px;height:2px;background:#cbcbcb;"></div>
<div style="left:12px;top:928px;width:1524px;height:2px;background:#cbcbcb;"></div>
<div style="left:12px;top:965px;width:1524px;height:2px;background:#cbcbcb;"></div>
<div style="left:12px;top:1001px;width:1524px;height:2px;background:#cbcbcb;"></div>
<div style="left:12px;top:1038px;width:1524px;height:2px;background:#cbcbcb;"></div>
<div style="left:12px;top:1075px;width:1524px;height:2px;background:#cbcbcb;"></div>
<div style="left:336px;top:742px;width:2px;height:335px;background:#cbcbcb;"></div>
<div style="left:441px;top:742px;width:2px;height:335px;background:#cbcbcb;"></div>
<div style="left:590px;top:742px;width:2px;height:335px;background:#cbcbcb;"></div>
<div style="left:722px;top:742px;width:2px;height:335px;background:#cbcbcb;"></div>
<div style="left:842px;top:742px;width:2px;height:335px;background:#cbcbcb;"></div>
<div style="left:954px;top:742px;width:2px;height:335px;background:#cbcbcb;"></div>
<div style="left:1086px;top:742px;width:2px;height:335px;background:#cbcbcb;"></div>
<div style="left:1246px;top:742px;width:2px;height:335px;background:#cbcbcb;"></div>
<div style="left:1393px;top:742px;width:2px;height:335px;background:#cbcbcb;"></div>
<div style="left:1534px;top:742px;width:2px;height:335px;background:#cbcbcb;"></div>
<span style="top:768.50px;font-size:18px;line-height:22px;color:#000;font-weight:700;left:14px;transform-origin:0 50%;transform:scaleX(1.0277);">Назва товару</span>
<span style="top:768.50px;font-size:18px;line-height:22px;color:#000;left:340px;transform-origin:0 50%;transform:scaleX(0.9573);">Артикул</span>
<span style="top:768.50px;font-size:18px;line-height:22px;color:#000;left:444px;transform-origin:0 50%;transform:scaleX(0.9694);">Штрих-код</span>
<span style="top:759.70px;font-size:18px;line-height:22px;color:#000;left:667.12px;transform-origin:100% 50%;transform:scaleX(0.9238);">Стара</span>
<span style="top:780.30px;font-size:18px;line-height:22px;color:#000;left:591.53px;transform-origin:100% 50%;transform:scaleX(0.9251);">роздрібна ціна</span>
<span style="top:749.40px;font-size:18px;line-height:22px;color:#000;left:796.44px;transform-origin:100% 50%;transform:scaleX(0.9865);">Нова</span>
<span style="top:770.00px;font-size:18px;line-height:22px;color:#000;left:752.72px;transform-origin:100% 50%;transform:scaleX(0.9381);">роздрібна</span>
<span style="top:790.60px;font-size:18px;line-height:22px;color:#000;left:801.95px;transform-origin:100% 50%;transform:scaleX(0.9432);">ціна</span>
<span style="top:759.70px;font-size:18px;line-height:22px;color:#000;left:899.12px;transform-origin:100% 50%;transform:scaleX(0.9238);">Стара</span>
<span style="top:780.30px;font-size:18px;line-height:22px;color:#000;left:849.52px;transform-origin:100% 50%;transform:scaleX(0.9454);">оптова ціна</span>
<span style="top:759.70px;font-size:18px;line-height:22px;color:#000;left:976.00px;transform-origin:100% 50%;transform:scaleX(0.9717);">Нова оптова</span>
<span style="top:780.30px;font-size:18px;line-height:22px;color:#000;left:1045.95px;transform-origin:100% 50%;transform:scaleX(0.9432);">ціна</span>
<span style="top:759.70px;font-size:18px;line-height:22px;color:#000;left:1110.02px;transform-origin:100% 50%;transform:scaleX(0.9547);">Нова роздрібна</span>
<span style="top:780.30px;font-size:18px;line-height:22px;color:#000;left:1104.92px;transform-origin:100% 50%;transform:scaleX(0.9192);">ціна зі знижкою</span>
<span style="top:759.70px;font-size:18px;line-height:22px;color:#000;left:1247.70px;transform-origin:100% 50%;transform:scaleX(0.9484);">Стара роздрібна</span>
<span style="top:780.30px;font-size:18px;line-height:22px;color:#000;left:1251.92px;transform-origin:100% 50%;transform:scaleX(0.9192);">ціна зі знижкою</span>
<span style="top:770.00px;font-size:18px;line-height:22px;color:#000;left:1422.73px;transform-origin:100% 50%;transform:scaleX(0.9602);">Собівартість</span>
<div style="left:12px;top:820px;width:324px;height:35px;background:#7aadd8;"></div>
<span style="top:827.00px;font-size:18px;line-height:22px;color:#fff;left:17px;transform-origin:0 50%;transform:scaleX(0.9574);">Кеди ECCO Keating 876545к6е89 41…</span>
<span style="top:827.00px;font-size:18px;line-height:22px;color:#00008b;left:343px;transform-origin:0 50%;transform:scaleX(0.9795);">876545к…</span>
<span style="top:827.00px;font-size:18px;line-height:22px;color:#00008b;left:449px;transform-origin:0 50%;transform:scaleX(0.9334);">2911200012527</span>
<span style="top:827.00px;font-size:18px;line-height:22px;color:#00008b;left:643.91px;transform-origin:100% 50%;transform:scaleX(0.9432);">3 065,17</span>
<span style="top:827.00px;font-size:18px;line-height:22px;color:#00008b;left:762.91px;transform-origin:100% 50%;transform:scaleX(0.9432);">3 708,90</span>
<span style="top:827.00px;font-size:18px;line-height:22px;color:#00008b;left:874.91px;transform-origin:100% 50%;transform:scaleX(0.9432);">1 788,00</span>
<span style="top:827.00px;font-size:18px;line-height:22px;color:#00008b;left:1007.91px;transform-origin:100% 50%;transform:scaleX(0.9432);">1 788,00</span>
<span style="top:827.00px;font-size:18px;line-height:22px;color:#00008b;left:1167.91px;transform-origin:100% 50%;transform:scaleX(0.9432);">3 338,01</span>
<span style="top:827.00px;font-size:18px;line-height:22px;color:#00008b;left:1314.91px;transform-origin:100% 50%;transform:scaleX(0.9432);">3 065,17</span>
<span style="top:827.00px;font-size:18px;line-height:22px;color:#00008b;left:1425.00px;transform-origin:100% 50%;transform:scaleX(0.9515);">3 065,33333</span>
<span style="top:863.72px;font-size:18px;line-height:22px;color:#00008b;left:17px;transform-origin:0 50%;transform:scaleX(0.9574);">Кеди ECCO Keating 876545к6е89 42…</span>
<span style="top:863.72px;font-size:18px;line-height:22px;color:#00008b;left:343px;transform-origin:0 50%;transform:scaleX(0.9795);">876545к…</span>
<span style="top:863.72px;font-size:18px;line-height:22px;color:#00008b;left:449px;transform-origin:0 50%;transform:scaleX(0.9334);">2911200012534</span>
<span style="top:863.72px;font-size:18px;line-height:22px;color:#00008b;left:643.91px;transform-origin:100% 50%;transform:scaleX(0.9432);">3 065,17</span>
<span style="top:863.72px;font-size:18px;line-height:22px;color:#00008b;left:762.91px;transform-origin:100% 50%;transform:scaleX(0.9432);">3 708,90</span>
<span style="top:863.72px;font-size:18px;line-height:22px;color:#00008b;left:874.91px;transform-origin:100% 50%;transform:scaleX(0.9432);">1 788,00</span>
<span style="top:863.72px;font-size:18px;line-height:22px;color:#00008b;left:1007.91px;transform-origin:100% 50%;transform:scaleX(0.9432);">1 788,00</span>
<span style="top:863.72px;font-size:18px;line-height:22px;color:#00008b;left:1167.91px;transform-origin:100% 50%;transform:scaleX(0.9432);">3 338,01</span>
<span style="top:863.72px;font-size:18px;line-height:22px;color:#00008b;left:1314.91px;transform-origin:100% 50%;transform:scaleX(0.9432);">3 065,17</span>
<span style="top:863.72px;font-size:18px;line-height:22px;color:#00008b;left:1455.91px;transform-origin:100% 50%;transform:scaleX(0.9432);">1 788,00</span>
<span style="top:900.44px;font-size:18px;line-height:22px;color:#00008b;left:17px;transform-origin:0 50%;transform:scaleX(0.9526);">Кеди Michael Kors Keating 42F9KEFS…</span>
<span style="top:900.44px;font-size:18px;line-height:22px;color:#00008b;left:343px;transform-origin:0 50%;transform:scaleX(0.9931);">42F9KEF…</span>
<span style="top:900.44px;font-size:18px;line-height:22px;color:#00008b;left:449px;transform-origin:0 50%;transform:scaleX(0.9334);">2940080000300</span>
<span style="top:900.44px;font-size:18px;line-height:22px;color:#00008b;left:643.91px;transform-origin:100% 50%;transform:scaleX(0.9432);">6 000,00</span>
<span style="top:900.44px;font-size:18px;line-height:22px;color:#00008b;left:762.91px;transform-origin:100% 50%;transform:scaleX(0.9432);">7 260,00</span>
<span style="top:900.44px;font-size:18px;line-height:22px;color:#00008b;left:874.91px;transform-origin:100% 50%;transform:scaleX(0.9432);">3 500,00</span>
<span style="top:900.44px;font-size:18px;line-height:22px;color:#00008b;left:1007.91px;transform-origin:100% 50%;transform:scaleX(0.9432);">3 500,00</span>
<span style="top:900.44px;font-size:18px;line-height:22px;color:#00008b;left:1167.91px;transform-origin:100% 50%;transform:scaleX(0.9432);">6 534,00</span>
<span style="top:900.44px;font-size:18px;line-height:22px;color:#00008b;left:1314.91px;transform-origin:100% 50%;transform:scaleX(0.9432);">6 000,00</span>
<span style="top:900.44px;font-size:18px;line-height:22px;color:#00008b;left:1455.91px;transform-origin:100% 50%;transform:scaleX(0.9432);">3 500,00</span>
<span style="top:937.16px;font-size:18px;line-height:22px;color:#00008b;left:17px;transform-origin:0 50%;transform:scaleX(0.9534);">Кеди Michael Kors Keating CD5463-1…</span>
<span style="top:937.16px;font-size:18px;line-height:22px;color:#00008b;left:343px;transform-origin:0 50%;transform:scaleX(0.9882);">CD5463-…</span>
<span style="top:937.16px;font-size:18px;line-height:22px;color:#00008b;left:449px;transform-origin:0 50%;transform:scaleX(0.9334);">2911200012329</span>
<span style="top:937.16px;font-size:18px;line-height:22px;color:#00008b;left:643.91px;transform-origin:100% 50%;transform:scaleX(0.9432);">3 049,00</span>
<span style="top:937.16px;font-size:18px;line-height:22px;color:#00008b;left:762.91px;transform-origin:100% 50%;transform:scaleX(0.9432);">3 689,30</span>
<span style="top:937.16px;font-size:18px;line-height:22px;color:#00008b;left:874.91px;transform-origin:100% 50%;transform:scaleX(0.9432);">1 780,00</span>
<span style="top:937.16px;font-size:18px;line-height:22px;color:#00008b;left:1007.91px;transform-origin:100% 50%;transform:scaleX(0.9432);">1 780,00</span>
<span style="top:937.16px;font-size:18px;line-height:22px;color:#00008b;left:1167.91px;transform-origin:100% 50%;transform:scaleX(0.9432);">3 320,37</span>
<span style="top:937.16px;font-size:18px;line-height:22px;color:#00008b;left:1314.91px;transform-origin:100% 50%;transform:scaleX(0.9432);">3 049,00</span>
<span style="top:937.16px;font-size:18px;line-height:22px;color:#00008b;left:1425.00px;transform-origin:100% 50%;transform:scaleX(0.9515);">2 984,16667</span>
<span style="top:973.88px;font-size:18px;line-height:22px;color:#00008b;left:17px;transform-origin:0 50%;transform:scaleX(0.9534);">Кеди Michael Kors Keating CD5463-1…</span>
<span style="top:973.88px;font-size:18px;line-height:22px;color:#00008b;left:343px;transform-origin:0 50%;transform:scaleX(0.9882);">CD5463-…</span>
<span style="top:973.88px;font-size:18px;line-height:22px;color:#00008b;left:449px;transform-origin:0 50%;transform:scaleX(0.9334);">2911200012343</span>
<span style="top:973.88px;font-size:18px;line-height:22px;color:#00008b;left:643.91px;transform-origin:100% 50%;transform:scaleX(0.9432);">3 049,00</span>
<span style="top:973.88px;font-size:18px;line-height:22px;color:#00008b;left:762.91px;transform-origin:100% 50%;transform:scaleX(0.9432);">3 689,30</span>
<span style="top:973.88px;font-size:18px;line-height:22px;color:#00008b;left:874.91px;transform-origin:100% 50%;transform:scaleX(0.9432);">1 780,00</span>
<span style="top:973.88px;font-size:18px;line-height:22px;color:#00008b;left:1007.91px;transform-origin:100% 50%;transform:scaleX(0.9432);">1 780,00</span>
<span style="top:973.88px;font-size:18px;line-height:22px;color:#00008b;left:1167.91px;transform-origin:100% 50%;transform:scaleX(0.9432);">3 320,37</span>
<span style="top:973.88px;font-size:18px;line-height:22px;color:#00008b;left:1314.91px;transform-origin:100% 50%;transform:scaleX(0.9432);">3 049,00</span>
<span style="top:973.88px;font-size:18px;line-height:22px;color:#00008b;left:1455.91px;transform-origin:100% 50%;transform:scaleX(0.9432);">1 780,00</span>
<span style="top:1010.60px;font-size:18px;line-height:22px;color:#00008b;left:17px;transform-origin:0 50%;transform:scaleX(0.9534);">Кеди Michael Kors Keating CD5463-1…</span>
<span style="top:1010.60px;font-size:18px;line-height:22px;color:#00008b;left:343px;transform-origin:0 50%;transform:scaleX(0.9882);">CD5463-…</span>
<span style="top:1010.60px;font-size:18px;line-height:22px;color:#00008b;left:449px;transform-origin:0 50%;transform:scaleX(0.9334);">2911200012381</span>
<span style="top:1010.60px;font-size:18px;line-height:22px;color:#00008b;left:643.91px;transform-origin:100% 50%;transform:scaleX(0.9432);">3 049,00</span>
<span style="top:1010.60px;font-size:18px;line-height:22px;color:#00008b;left:762.91px;transform-origin:100% 50%;transform:scaleX(0.9432);">3 689,30</span>
<span style="top:1010.60px;font-size:18px;line-height:22px;color:#00008b;left:874.91px;transform-origin:100% 50%;transform:scaleX(0.9432);">1 780,00</span>
<span style="top:1010.60px;font-size:18px;line-height:22px;color:#00008b;left:1007.91px;transform-origin:100% 50%;transform:scaleX(0.9432);">1 780,00</span>
<span style="top:1010.60px;font-size:18px;line-height:22px;color:#00008b;left:1167.91px;transform-origin:100% 50%;transform:scaleX(0.9432);">3 320,37</span>
<span style="top:1010.60px;font-size:18px;line-height:22px;color:#00008b;left:1314.91px;transform-origin:100% 50%;transform:scaleX(0.9432);">3 049,00</span>
<span style="top:1010.60px;font-size:18px;line-height:22px;color:#00008b;left:1455.91px;transform-origin:100% 50%;transform:scaleX(0.9432);">1 780,00</span>
<span style="top:1047.32px;font-size:18px;line-height:22px;color:#00008b;left:17px;transform-origin:0 50%;transform:scaleX(0.9304);">Кросівки New Balance 35(р) білий</span>
<span style="top:1047.32px;font-size:18px;line-height:22px;color:#00008b;left:449px;transform-origin:0 50%;transform:scaleX(0.9334);">2911200012176</span>
<span style="top:1047.32px;font-size:18px;line-height:22px;color:#00008b;left:643.91px;transform-origin:100% 50%;transform:scaleX(0.9432);">3 000,00</span>
<span style="top:1047.32px;font-size:18px;line-height:22px;color:#00008b;left:762.91px;transform-origin:100% 50%;transform:scaleX(0.9432);">3 630,00</span>
<span style="top:1047.32px;font-size:18px;line-height:22px;color:#00008b;left:874.91px;transform-origin:100% 50%;transform:scaleX(0.9432);">1 500,00</span>
<span style="top:1047.32px;font-size:18px;line-height:22px;color:#00008b;left:1007.91px;transform-origin:100% 50%;transform:scaleX(0.9432);">1 500,00</span>
<span style="top:1047.32px;font-size:18px;line-height:22px;color:#00008b;left:1167.91px;transform-origin:100% 50%;transform:scaleX(0.9432);">3 267,00</span>
<span style="top:1047.32px;font-size:18px;line-height:22px;color:#00008b;left:1314.91px;transform-origin:100% 50%;transform:scaleX(0.9432);">3 000,00</span>
<span style="top:1047.32px;font-size:18px;line-height:22px;color:#00008b;left:1455.91px;transform-origin:100% 50%;transform:scaleX(0.9432);">1 500,00</span>
<svg style="left:1542.4px;top:749.7px" width="16.2" height="9.6" viewBox="0 0 16.2 9.6" fill="none"><path d="M2 7.6 L8.1 2 L14.2 7.6" stroke="#484848" stroke-width="2.7" stroke-linejoin="miter"/></svg>
<div style="left:1539px;top:768px;width:24px;height:158px;background:#c1c1c1;border-radius:4px;"></div>
<svg style="left:1542.2px;top:1093.6000000000001px" width="16.2" height="9.6" viewBox="0 0 16.2 9.6" fill="none"><path d="M2 2 L8.1 7.6 L14.2 2" stroke="#484848" stroke-width="2.7" stroke-linejoin="miter"/></svg>
<svg style="left:19px;top:1117px" width="12" height="18" viewBox="0 0 12 18" fill="none"><path d="M9 3.2 L3.2 9.2 L9 15.2" stroke="#3c3c3c" stroke-width="2.3"/></svg>
<div style="left:39px;top:1113px;width:1076px;height:24px;background:#c0c0c0;border-radius:4px;"></div>
<svg style="left:1517.5px;top:1117px" width="12" height="18" viewBox="0 0 12 18" fill="none"><path d="M3 3.2 L8.8 9.2 L3 15.2" stroke="#3c3c3c" stroke-width="2.3"/></svg>
<div style="left:1537px;top:1112px;width:27px;height:27px;background:#c0c0c0;"></div>
<div style="left:12px;top:1147px;width:154px;height:36px;background:#e4e5e7;"></div>
<span style="top:1156.00px;font-size:18px;line-height:22px;color:#6d6d6d;left:24px;transform-origin:0 50%;transform:scaleX(0.9323);">Підвищення ціни</span>
<div style="left:0px;top:1199px;width:1577px;height:1px;background:#8c8c8c;"></div>
<div style="left:1575px;top:46px;width:1px;height:1154px;background:#dcdcdc;"></div>
<div style="left:1575px;top:0px;width:2px;height:46px;background:#cccccc;"></div>
</div></body></html>
